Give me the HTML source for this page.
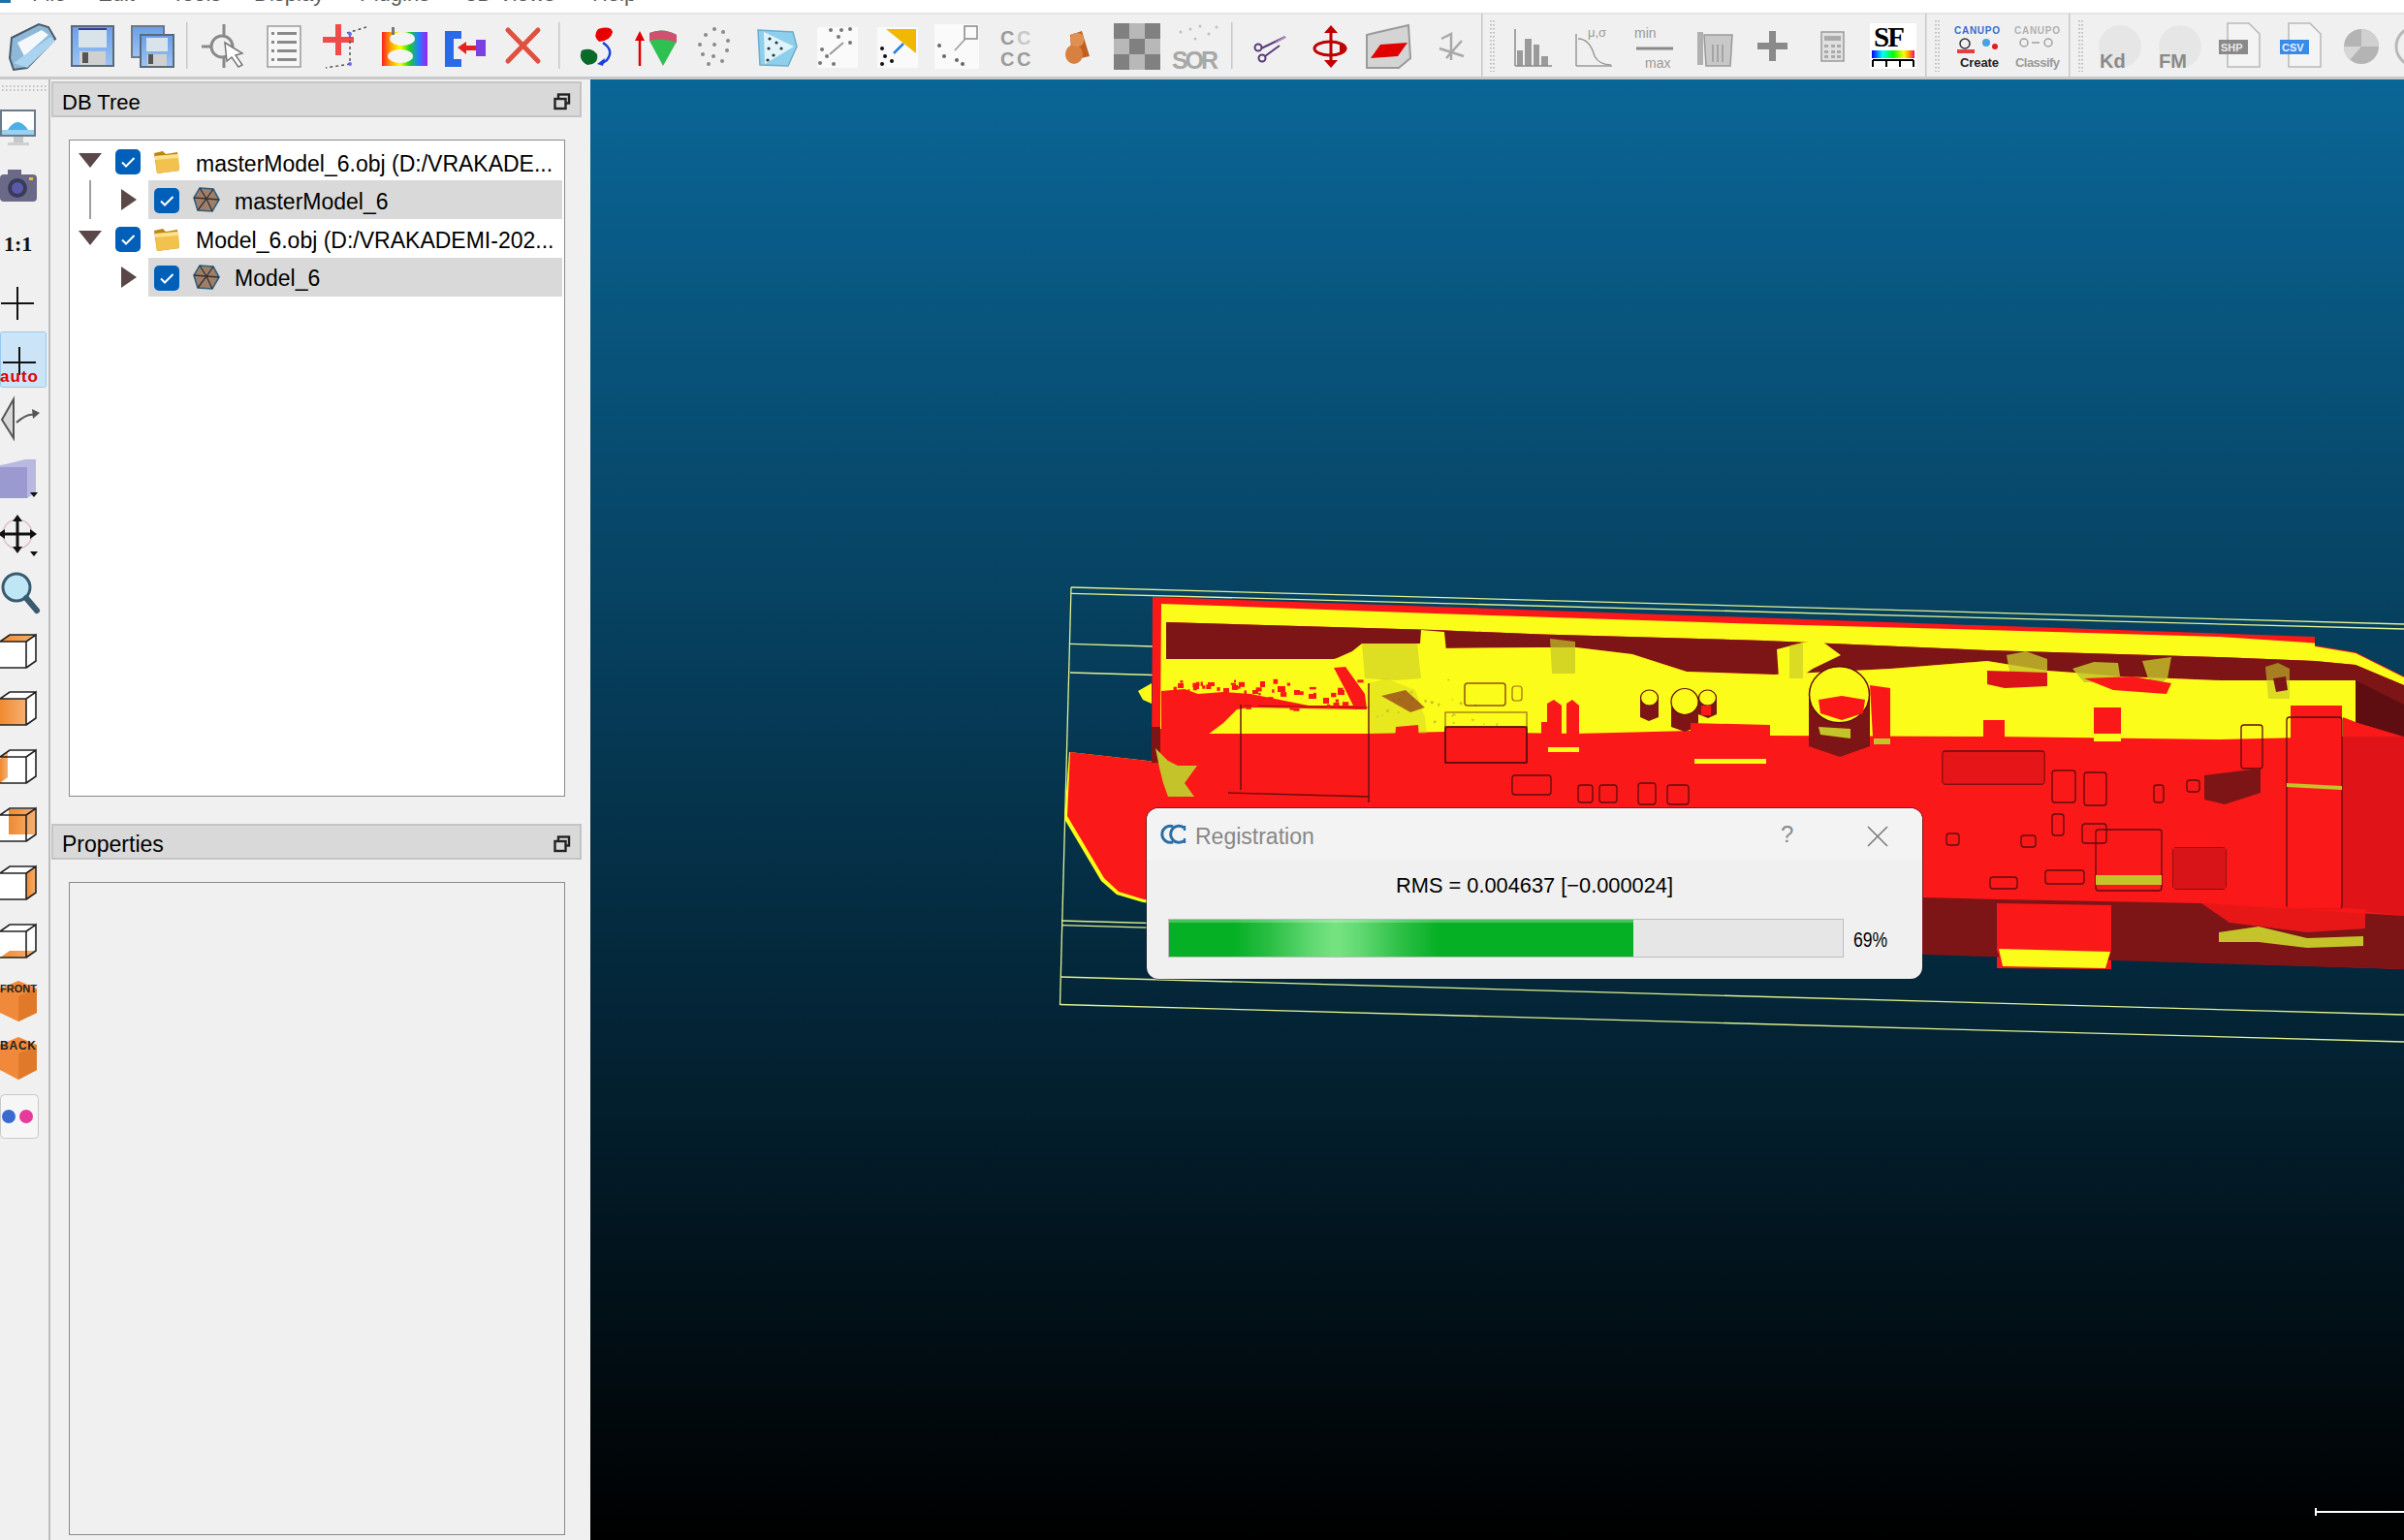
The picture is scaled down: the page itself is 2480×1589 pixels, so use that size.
<!DOCTYPE html>
<html><head><meta charset="utf-8">
<style>
*{margin:0;padding:0;box-sizing:border-box}
html,body{width:2480px;height:1589px;overflow:hidden;background:#f0f0f0;font-family:"Liberation Sans",sans-serif}
.abs{position:absolute}
#menubar{left:0;top:0;width:2480px;height:14px;background:#fff;overflow:hidden}
#menubar span{position:absolute;top:-17px;font-size:22px;line-height:1;color:#5a5a5a}
#tb{left:0;top:14px;width:2480px;height:68px;background:#f0f0f0;border-top:1px solid #e6e6e6}
#tbline{left:0;top:79px;width:2480px;height:3px;background:#c9c9c9}
#view{left:609px;top:82px;width:1871px;height:1507px;background:linear-gradient(to bottom,rgb(10,102,151) 0%,rgb(0,0,0) 100%);overflow:hidden}
#vsep{left:50px;top:82px;width:2px;height:1507px;background:#bdbdbd}
.dockhdr{left:53px;width:547px;height:37px;background:#d9d9d9;border:2px solid #c4c4c4;font-size:22px;color:#000}
.dockhdr .t{position:absolute;left:9px;top:7px}
.box{left:71px;width:512px;border:1px solid #8a8a8a}
.row{position:absolute;left:0;height:40px}
.sel{position:absolute;left:82px;width:427px;height:40px;background:#d9d9d9}
.cb{position:absolute;width:26px;height:26px;background:#005fb8;border-radius:5px}
.txt{position:absolute;font-size:23px;color:#000;white-space:nowrap;margin-top:5px}
</style></head><body>
<div id="menubar" class="abs">
<div class="abs" style="left:0;top:-8px;width:11px;height:11px;background:#1f6fa8"></div>
<span style="left:33px">File</span><span style="left:101px">Edit</span><span style="left:177px">Tools</span><span style="left:262px">Display</span><span style="left:371px">Plugins</span><span style="left:480px">3D Views</span><span style="left:611px">Help</span>
<div class="abs" style="left:0;top:13px;width:2480px;height:1px;background:#e3e3e3"></div>
</div>
<div id="tb" class="abs"></div>
<div id="tbline" class="abs"></div>
<div id="vsep" class="abs"></div>
<!--TOOLBAR-->
<svg class="abs" style="left:0;top:0" width="2480" height="82" viewBox="0 0 2480 82">
<defs>
<linearGradient id="rainbow" x1="0" y1="0" x2="1" y2="0"><stop offset="0" stop-color="#ff2020"/><stop offset="0.2" stop-color="#ffa500"/><stop offset="0.4" stop-color="#ffff00"/><stop offset="0.6" stop-color="#20d020"/><stop offset="0.8" stop-color="#2080ff"/><stop offset="1" stop-color="#a020f0"/></linearGradient>
<linearGradient id="sfbar" x1="0" y1="0" x2="1" y2="0"><stop offset="0" stop-color="#0000ff"/><stop offset="0.25" stop-color="#00ffff"/><stop offset="0.5" stop-color="#00ff00"/><stop offset="0.75" stop-color="#ffff00"/><stop offset="0.9" stop-color="#ff8000"/><stop offset="1" stop-color="#ff0080"/></linearGradient>
<linearGradient id="flop" x1="0" y1="0" x2="0" y2="1"><stop offset="0" stop-color="#6a9ee8"/><stop offset="1" stop-color="#9cc4f4"/></linearGradient>
</defs>
<!-- separators -->
<g fill="#c8c8c8">
<rect x="192" y="23" width="1.5" height="48"/>
<rect x="576" y="23" width="1.5" height="48"/>
<rect x="1270" y="23" width="1.5" height="48"/>
<rect x="1528" y="14" width="1.5" height="66"/>
<rect x="1986" y="14" width="1.5" height="66"/>
<rect x="2134" y="14" width="1.5" height="66"/>
</g>
<g fill="#b8b8b8">

</g>
<g stroke="#b0b0b0" stroke-width="1.5" stroke-dasharray="1.5 2.5">
<line x1="1538" y1="21" x2="1538" y2="74"/><line x1="1541" y1="21" x2="1541" y2="74"/>
<line x1="1997" y1="21" x2="1997" y2="74"/><line x1="2000" y1="21" x2="2000" y2="74"/>
<line x1="2145" y1="21" x2="2145" y2="74"/><line x1="2148" y1="21" x2="2148" y2="74"/>
</g>
<!-- 1 open folder -->
<path d="M12,39 L40,25 L50,28 L57,40 L28,70 L14,72 L10,60 Z" fill="#8fb8d8" stroke="#4a5a68" stroke-width="2"/>
<path d="M18,44 L43,31 L50,36 L25,58 Z" fill="#f4f8fb"/>
<path d="M14,65 L52,38 L57,42 L28,70 Z" fill="#a9d3ee"/>
<!-- 2 save -->
<rect x="74" y="27" width="43" height="41" fill="url(#flop)" stroke="#5a6a78" stroke-width="2"/>
<rect x="81" y="29" width="29" height="20" fill="#d8e4ea"/>
<rect x="81" y="29" width="29" height="2" fill="#3a3aa0"/>
<rect x="82" y="53" width="27" height="14" fill="#d0d0d0"/>
<rect x="85" y="54" width="6" height="11" fill="#555"/>
<!-- 3 save all -->
<rect x="136" y="27" width="33" height="32" fill="url(#flop)" stroke="#6a7a88" stroke-width="2"/>
<rect x="145" y="36" width="34" height="33" fill="url(#flop)" stroke="#5a6a78" stroke-width="2"/>
<rect x="151" y="39" width="22" height="14" fill="#d8e4ea"/>
<rect x="152" y="56" width="20" height="12" fill="#d0d0d0"/>
<rect x="153" y="56" width="5" height="10" fill="#555"/>
<!-- 4 point pick -->
<g stroke="#8a8a8a" stroke-width="3" fill="none"><circle cx="229" cy="48" r="11"/><line x1="231" y1="25" x2="231" y2="37"/><line x1="208" y1="48" x2="218" y2="48"/><line x1="231" y1="59" x2="231" y2="70"/></g>
<path d="M232,44 L250,55 L243,57 L250,67 L246,69 L239,59 L234,63 Z" fill="#fff" stroke="#777" stroke-width="1.5"/>
<!-- 5 list -->
<rect x="276" y="27" width="34" height="42" fill="#f7f7f7" stroke="#9a9a9a" stroke-width="1.5"/>
<g fill="#8a8a8a"><rect x="280" y="33" width="3" height="3"/><rect x="286" y="33" width="20" height="3"/><rect x="280" y="42" width="3" height="3"/><rect x="286" y="42" width="20" height="3"/><rect x="280" y="51" width="3" height="3"/><rect x="286" y="51" width="20" height="3"/><rect x="280" y="60" width="3" height="3"/><rect x="286" y="60" width="20" height="3"/></g>
<!-- 6 red cross -->
<path d="M346,25 L352,25 L352,38 L365,38 L365,44 L352,44 L352,57 L346,57 L346,44 L333,44 L333,38 L346,38 Z" fill="#f04a4a"/>
<g stroke="#555" stroke-width="1.5" stroke-dasharray="3 3" fill="none"><path d="M358,34 L378,28"/><path d="M361,36 L361,66 L336,70"/></g>
<circle cx="361" cy="35" r="2" fill="#6a6aff"/><circle cx="361" cy="66" r="2" fill="#6a6aff"/>
<!-- 7 rainbow sheep -->
<rect x="394" y="33" width="47" height="35" fill="url(#rainbow)"/>
<ellipse cx="415" cy="40" rx="13" ry="7" fill="#f4f4f4"/><ellipse cx="413" cy="58" rx="13" ry="7" fill="#f4f4f4"/>
<rect x="404" y="28" width="3" height="8" fill="#777"/>
<!-- 8 blue bracket -->
<path d="M459,32 L476,32 L476,40 L468,40 L468,61 L476,61 L476,69 L459,69 Z" fill="#2a6ae8"/>
<path d="M472,49 L481,43 L481,47 L493,47 L493,52 L481,52 L481,56 Z" fill="#e82020"/>
<rect x="491" y="41" width="10" height="17" fill="#7a40e0"/>
<!-- 9 red X -->
<g stroke="#e05040" stroke-width="5" stroke-linecap="round"><line x1="524" y1="31" x2="555" y2="63"/><line x1="555" y1="31" x2="524" y2="63"/></g>
<!-- 10 blobs arrow -->
<path d="M617,30 Q630,26 632,33 Q630,42 618,43 Q611,37 617,30 Z" fill="#e80000"/>
<path d="M600,52 Q610,48 616,56 Q618,66 606,67 Q596,62 600,52 Z" fill="#0a6a2a"/>
<path d="M622,44 Q634,52 626,62 L620,66" fill="none" stroke="#1a40e0" stroke-width="2.5"/>
<path d="M616,66 L624,60 L622,68 Z" fill="#1a40e0"/>
<!-- 11 red arrow + cone -->
<line x1="660" y1="68" x2="660" y2="38" stroke="#e00000" stroke-width="2.5"/><path d="M655,42 L660,32 L665,42 Z" fill="#e00000"/>
<path d="M670,34 Q684,28 698,36 L698,43 L684,68 L670,42 Z" fill="#2ec050"/>
<path d="M670,34 Q684,28 698,36 L698,44 Q684,38 670,42 Z" fill="#d05070"/>
<!-- 12 dots circle -->
<g fill="#8a8a8a"><circle cx="737" cy="30" r="2"/><circle cx="746" cy="33" r="2"/><circle cx="728" cy="36" r="2"/><circle cx="751" cy="42" r="2"/><circle cx="722" cy="46" r="2"/><circle cx="737" cy="46" r="2"/><circle cx="750" cy="52" r="2"/><circle cx="725" cy="56" r="2"/><circle cx="736" cy="58" r="2"/><circle cx="745" cy="63" r="2"/><circle cx="731" cy="66" r="2"/></g>
<!-- 13 blue triangle -->
<path d="M782,31 L818,33 L822,48 L813,68 L784,67 Z" fill="#8ed0ec" stroke="#6aaed0" stroke-width="1.5"/>
<path d="M788,33 L819,48 L789,66 Z" fill="#dff3fb"/>
<g fill="#333"><circle cx="794" cy="40" r="1.6"/><circle cx="801" cy="44" r="1.6"/><circle cx="793" cy="50" r="1.6"/><circle cx="806" cy="50" r="1.6"/><circle cx="798" cy="57" r="1.6"/><circle cx="792" cy="62" r="1.6"/></g>
<!-- 14 scattered dots -->
<rect x="843" y="28" width="42" height="42" fill="#fafafa"/>
<g fill="#777"><circle cx="857" cy="31" r="2"/><circle cx="868" cy="31" r="2"/><circle cx="877" cy="30" r="2"/><circle cx="865" cy="38" r="2"/><circle cx="877" cy="44" r="2"/><circle cx="848" cy="51" r="2"/><circle cx="853" cy="58" r="2"/><circle cx="846" cy="65" r="2"/><circle cx="860" cy="66" r="2"/></g>
<line x1="856" y1="56" x2="870" y2="44" stroke="#999" stroke-width="2"/>
<!-- 15 yellow tri -->
<rect x="905" y="28" width="42" height="42" fill="#fafafa"/>
<path d="M914,30 L945,30 L945,55 Z" fill="#f0b800"/>
<g fill="#111"><circle cx="910" cy="50" r="2"/><circle cx="913" cy="58" r="2"/><circle cx="920" cy="63" r="2"/><circle cx="910" cy="66" r="2"/></g>
<line x1="922" y1="55" x2="932" y2="45" stroke="#2a80e0" stroke-width="2.5"/>
<!-- 16 dots zoom -->
<rect x="964" y="25" width="46" height="46" fill="#fafafa"/>
<rect x="995" y="27" width="13" height="13" fill="none" stroke="#888" stroke-width="1.5"/>
<line x1="985" y1="52" x2="996" y2="40" stroke="#999" stroke-width="1.5"/>
<g fill="#666"><circle cx="969" cy="47" r="2"/><circle cx="974" cy="58" r="2"/><circle cx="987" cy="62" r="2"/><circle cx="993" cy="66" r="2"/></g>
<!-- 17 CC CC -->
<g font-family="Liberation Sans" font-weight="bold" font-size="20" fill="#9a9a9a"><text x="1032" y="46">C</text><text x="1049" y="46" fill="#c8c8c8">C</text><text x="1032" y="68">C</text><text x="1049" y="68">C</text></g>
<!-- 18 orange -->
<path d="M1104,36 L1116,32 L1124,58 L1106,62 Z" fill="#c06020"/>
<ellipse cx="1108" cy="56" rx="9" ry="10" fill="#d88040"/>
<rect x="1104" y="34" width="14" height="14" rx="6" fill="#e09050"/>
<!-- 19 checker -->
<g fill="#808080"><rect x="1149" y="24" width="48" height="48"/></g>
<g fill="#b8b8b8"><rect x="1165" y="24" width="16" height="16"/><rect x="1149" y="40" width="16" height="16"/><rect x="1181" y="40" width="16" height="16"/><rect x="1165" y="56" width="16" height="16"/></g>
<!-- 20 SOR -->
<text x="1209" y="71" font-family="Liberation Sans" font-weight="bold" font-size="25" fill="#a8a8a8" textLength="48">SOR</text>
<g fill="#c0c0c0"><circle cx="1218" cy="33" r="1.5"/><circle cx="1228" cy="30" r="1.5"/><circle cx="1238" cy="27" r="1.5"/><circle cx="1247" cy="35" r="1.5"/><circle cx="1255" cy="28" r="1.5"/><circle cx="1233" cy="40" r="1.5"/></g>
<!-- 21 scissors -->
<g stroke="#5a3a7a" stroke-width="2" fill="none"><circle cx="1298" cy="49" r="3.5"/><circle cx="1302" cy="60" r="3.5"/><path d="M1301,50 L1326,38 M1305,58 L1320,47"/></g>
<path d="M1316,44 L1326,38" stroke="#b090c0" stroke-width="2"/>
<!-- 22 move arrows -->
<g stroke="#c00000" stroke-width="3" fill="none"><line x1="1373" y1="31" x2="1373" y2="65"/><ellipse cx="1372" cy="50" rx="16" ry="7"/></g>
<g fill="#c00000"><path d="M1366,34 L1373,26 L1380,34 Z"/><path d="M1366,62 L1373,70 L1380,62 Z"/><path d="M1382,45 L1390,50 L1382,55 Z"/></g>
<!-- 23 box red plane -->
<path d="M1418,34 L1453,26 L1455,60 L1443,70 L1410,70 L1410,36 Z" fill="#d4d4d4" stroke="#9a9a9a" stroke-width="2"/>
<path d="M1414,60 L1424,46 L1452,44 L1442,58 Z" fill="#e00000"/>
<!-- 24 gray star -->
<g stroke="#a8a8a8" stroke-width="2.5" fill="none"><path d="M1487,40 L1497,35 L1497,62 M1485,50 L1510,58 M1492,60 L1508,42"/></g>
<!-- 25 histogram -->
<g fill="#9a9a9a"><rect x="1565" y="52" width="6" height="16"/><rect x="1573" y="40" width="7" height="28"/><rect x="1582" y="46" width="6" height="22"/><rect x="1590" y="58" width="7" height="10"/></g>
<g stroke="#8a8a8a" stroke-width="1.5"><line x1="1563" y1="30" x2="1563" y2="68"/><line x1="1563" y1="68" x2="1601" y2="68"/></g>
<!-- 26 mu sigma -->
<g stroke="#9a9a9a" stroke-width="1.5" fill="none"><line x1="1626" y1="35" x2="1626" y2="68"/><line x1="1626" y1="68" x2="1663" y2="68"/><path d="M1628,40 Q1640,40 1645,58 Q1650,67 1662,67"/></g>
<text x="1638" y="38" font-family="Liberation Sans" font-size="13" fill="#9a9a9a">μ,σ</text>
<!-- 27 min max -->
<g font-family="Liberation Sans" font-size="14" fill="#9a9a9a"><text x="1686" y="39">min</text><text x="1697" y="70">max</text></g>
<g stroke="#8a8a8a" stroke-width="3"><line x1="1688" y1="50" x2="1726" y2="50"/></g>
<!-- 28 trash -->
<rect x="1751" y="33" width="6" height="34" fill="#b0b0b0"/>
<path d="M1758,36 L1787,36 L1785,68 L1760,68 Z" fill="#c8c8c8" stroke="#999" stroke-width="1.5"/>
<g stroke="#999" stroke-width="1.5"><line x1="1767" y1="46" x2="1767" y2="64"/><line x1="1772" y1="46" x2="1772" y2="64"/><line x1="1777" y1="46" x2="1777" y2="64"/></g>
<!-- 29 plus -->
<path d="M1825,32 L1832,32 L1832,44 L1844,44 L1844,51 L1832,51 L1832,63 L1825,63 L1825,51 L1813,51 L1813,44 L1825,44 Z" fill="#8a8a8a"/>
<!-- 30 calculator -->
<rect x="1879" y="33" width="23" height="30" fill="#e0e0e0" stroke="#9a9a9a" stroke-width="1.5"/>
<rect x="1882" y="37" width="17" height="5" fill="#aaa"/>
<g fill="#aaa"><rect x="1882" y="46" width="4" height="3"/><rect x="1889" y="46" width="4" height="3"/><rect x="1895" y="46" width="4" height="3"/><rect x="1882" y="52" width="4" height="3"/><rect x="1889" y="52" width="4" height="3"/><rect x="1895" y="52" width="4" height="3"/><rect x="1882" y="57" width="4" height="3"/><rect x="1889" y="57" width="4" height="3"/><rect x="1895" y="57" width="4" height="3"/></g>
<!-- 31 SF -->
<rect x="1929" y="24" width="48" height="47" fill="#fff"/>
<text x="1933" y="48" font-family="Liberation Serif" font-weight="bold" font-size="29" fill="#000" letter-spacing="-2">SF</text>
<rect x="1931" y="52" width="44" height="8" fill="url(#sfbar)"/>
<path d="M1932,62 L1974,62 M1932,62 L1932,69 M1946,62 L1946,69 M1960,62 L1960,69 M1974,62 L1974,69" stroke="#000" stroke-width="2"/>
<!-- 32 canupo create -->
<text x="2016" y="35" font-family="Liberation Sans" font-weight="bold" font-size="10" fill="#3a6ad0" textLength="47">CANUPO</text>
<circle cx="2027" cy="45" r="5" fill="none" stroke="#333" stroke-width="1.5"/><circle cx="2049" cy="44" r="4" fill="#4aa0e0"/><circle cx="2058" cy="48" r="3" fill="#e02020"/>
<rect x="2019" y="51" width="18" height="4" fill="#e04040"/>
<text x="2022" y="69" font-family="Liberation Sans" font-weight="bold" font-size="13" fill="#222" textLength="40">Create</text>
<!-- 33 canupo classify -->
<text x="2078" y="35" font-family="Liberation Sans" font-weight="bold" font-size="10" fill="#b0b0b0" textLength="47">CANUPO</text>
<g stroke="#a0a0a0" stroke-width="1.5" fill="none"><circle cx="2088" cy="44" r="4"/><circle cx="2113" cy="44" r="4"/><line x1="2096" y1="44" x2="2104" y2="44"/></g>
<text x="2079" y="69" font-family="Liberation Sans" font-weight="bold" font-size="13" fill="#9a9a9a" textLength="46">Classify</text>
<!-- 34 Kd -->
<ellipse cx="2187" cy="48" rx="22" ry="22" fill="#e6e6e6"/>
<text x="2166" y="70" font-family="Liberation Sans" font-weight="bold" font-size="20" fill="#8a8a8a">Kd</text>
<!-- 35 FM -->
<ellipse cx="2249" cy="48" rx="22" ry="22" fill="#e6e6e6"/>
<text x="2227" y="70" font-family="Liberation Sans" font-weight="bold" font-size="20" fill="#8a8a8a">FM</text>
<!-- 36 SHP -->
<path d="M2298,24 L2320,24 L2331,35 L2331,69 L2298,69 Z" fill="#f4f4f4" stroke="#b8b8b8" stroke-width="1.5"/>
<rect x="2289" y="41" width="30" height="15" fill="#8a8a8a"/>
<text x="2291" y="53" font-family="Liberation Sans" font-weight="bold" font-size="11" fill="#e8e8e8">SHP</text>
<!-- 37 CSV -->
<path d="M2361,24 L2383,24 L2394,35 L2394,69 L2361,69 Z" fill="#f4f4f4" stroke="#b8b8b8" stroke-width="1.5"/>
<rect x="2352" y="41" width="30" height="15" fill="#3a8ae8"/>
<text x="2354" y="53" font-family="Liberation Sans" font-weight="bold" font-size="11" fill="#e8f0ff">CSV</text>
<!-- 38 gray circle -->
<circle cx="2436" cy="48" r="18" fill="#b4b4b4"/>
<path d="M2436,48 L2436,30 A18,18 0 0 1 2454,48 Z" fill="#d0d0d0"/>
<path d="M2436,48 L2424,62 A18,18 0 0 1 2418,48 Z" fill="#d6d6d6"/>
<circle cx="2492" cy="48" r="20" fill="none" stroke="#b8b8b8" stroke-width="3"/>
</svg>

<!--LEFTTB-->
<svg class="abs" style="left:0;top:82px" width="50" height="1120" viewBox="0 82 50 1120">
<defs>
<linearGradient id="org" x1="0" y1="0" x2="1" y2="0"><stop offset="0" stop-color="#f08a30"/><stop offset="1" stop-color="#f6b070"/></linearGradient>
</defs>
<g stroke="#b0b0b0" stroke-width="1.5" stroke-dasharray="1.5 2.5"><line x1="2" y1="89" x2="48" y2="89"/><line x1="2" y1="93" x2="48" y2="93"/></g>
<!-- monitor -->
<rect x="1" y="114" width="35" height="26" fill="#fff" stroke="#6a7a88" stroke-width="2"/>
<path d="M8,134 Q18,118 29,134 Z" fill="#4ab0e8"/>
<rect x="2" y="134" width="33" height="5" fill="#9ad0f0"/>
<rect x="14" y="141" width="10" height="6" fill="#c8c8c8"/><rect x="8" y="147" width="22" height="3" fill="#d0d0d0"/>
<!-- camera -->
<rect x="0" y="180" width="38" height="28" rx="4" fill="#6a6a88"/>
<rect x="8" y="175" width="14" height="7" fill="#6a6a88"/>
<circle cx="18" cy="194" r="10" fill="#3a3a5a"/><circle cx="18" cy="194" r="6" fill="#5a5aa8"/>
<rect x="30" y="183" width="4" height="3" fill="#f0c020"/>
<!-- 1:1 -->
<text x="4" y="259" font-family="Liberation Serif" font-weight="bold" font-size="22" fill="#111">1:1</text>
<!-- cross -->
<g stroke="#111" stroke-width="2"><line x1="18" y1="296" x2="18" y2="330"/><line x1="1" y1="313" x2="35" y2="313"/></g>
<!-- auto (highlighted) -->
<rect x="0.5" y="342.5" width="47" height="57" rx="2" fill="#cce4f7" stroke="#99c9ef" stroke-width="1"/>
<g stroke="#111" stroke-width="2"><line x1="20" y1="358" x2="20" y2="387"/><line x1="3" y1="374" x2="37" y2="374"/></g>
<text x="0" y="394" font-family="Liberation Sans" font-weight="bold" font-size="17" fill="#e00000" textLength="39">auto</text>
<!-- perspective -->
<path d="M2,433 L14,412 L14,452 Z" fill="#d8d8d8" stroke="#555" stroke-width="2"/>
<path d="M17,436 Q28,426 36,428" fill="none" stroke="#555" stroke-width="2"/><path d="M33,422 L41,426 L34,432 Z" fill="#555"/>
<!-- cube -->
<path d="M6,479 L26,474 L37,474 L37,508 L28,514 L0,514 L0,480 Z" fill="#b8b8e0"/>
<rect x="0" y="482" width="28" height="32" fill="#9a9ad0"/>
<path d="M31,508 L39,508 L35,513 Z" fill="#111"/>
<!-- move -->
<circle cx="18" cy="551" r="15" fill="none" stroke="#e0c0c0" stroke-width="1.5"/>
<g stroke="#111" stroke-width="3"><line x1="18" y1="535" x2="18" y2="568"/><line x1="2" y1="551" x2="34" y2="551"/></g>
<g fill="#111"><path d="M13,538 L18,531 L23,538 Z"/><path d="M13,564 L18,571 L23,564 Z"/><path d="M5,546 L-2,551 L5,556 Z"/><path d="M31,546 L38,551 L31,556 Z"/></g>
<path d="M31,569 L39,569 L35,574 Z" fill="#111"/>
<!-- magnifier -->
<circle cx="17" cy="606" r="14" fill="#bfe6f4" stroke="#3a5a70" stroke-width="3"/>
<line x1="27" y1="617" x2="38" y2="630" stroke="#3a5a70" stroke-width="6" stroke-linecap="round"/>
<!-- cubes: top, front, left, back, right, bottom -->
<path d="M0,662 L27,662 L27,689 L0,689 Z" fill="#fff"/><path d="M0,662 L10,655 L37,655 L27,662 Z" fill="#fff"/><path d="M27,662 L37,655 L37,682 L27,689 Z" fill="#fff"/>
<path d="M0,662 L10,655 L37,655 L27,662 Z" fill="url(#org)"/>
<path d="M0,662 L27,662 L27,689 L0,689 M27,662 L37,655 L37,682 L27,689 M0,662 L10,655 L37,655" fill="none" stroke="#222" stroke-width="1.6"/>
<path d="M0,721 L27,721 L27,748 L0,748 Z" fill="#fff"/><path d="M0,721 L10,714 L37,714 L27,721 Z" fill="#fff"/><path d="M27,721 L37,714 L37,741 L27,748 Z" fill="#fff"/>
<path d="M0,721 L27,721 L27,748 L0,748 Z" fill="url(#org)"/>
<path d="M0,721 L27,721 L27,748 L0,748 M27,721 L37,714 L37,741 L27,748 M0,721 L10,714 L37,714" fill="none" stroke="#222" stroke-width="1.6"/>
<path d="M0,781 L27,781 L27,808 L0,808 Z" fill="#fff"/><path d="M0,781 L10,774 L37,774 L27,781 Z" fill="#fff"/><path d="M27,781 L37,774 L37,801 L27,808 Z" fill="#fff"/>
<path d="M0,783 L8,775 L8,802 L0,808 Z" fill="url(#org)"/>
<path d="M0,781 L27,781 L27,808 L0,808 M27,781 L37,774 L37,801 L27,808 M0,781 L10,774 L37,774" fill="none" stroke="#222" stroke-width="1.6"/>
<path d="M0,841 L27,841 L27,868 L0,868 Z" fill="#fff"/><path d="M0,841 L10,834 L37,834 L27,841 Z" fill="#fff"/><path d="M27,841 L37,834 L37,861 L27,868 Z" fill="#fff"/>
<rect x="9" y="835" width="27" height="26" fill="url(#org)"/>
<path d="M0,841 L27,841 L27,868 L0,868 M27,841 L37,834 L37,861 L27,868 M0,841 L10,834 L37,834" fill="none" stroke="#222" stroke-width="1.6"/>
<path d="M0,901 L27,901 L27,928 L0,928 Z" fill="#fff"/><path d="M0,901 L10,894 L37,894 L27,901 Z" fill="#fff"/><path d="M27,901 L37,894 L37,921 L27,928 Z" fill="#fff"/>
<path d="M27,901 L37,894 L37,921 L27,928 Z" fill="url(#org)"/>
<path d="M0,901 L27,901 L27,928 L0,928 M27,901 L37,894 L37,921 L27,928 M0,901 L10,894 L37,894" fill="none" stroke="#222" stroke-width="1.6"/>
<path d="M0,961 L27,961 L27,988 L0,988 Z" fill="#fff"/><path d="M0,961 L10,954 L37,954 L27,961 Z" fill="#fff"/><path d="M27,961 L37,954 L37,981 L27,988 Z" fill="#fff"/>
<path d="M0,988 L10,981 L37,981 L27,988 Z" fill="url(#org)"/>
<path d="M0,961 L27,961 L27,988 L0,988 M27,961 L37,954 L37,981 L27,988 M0,961 L10,954 L37,954" fill="none" stroke="#222" stroke-width="1.6"/>
<!-- FRONT iso -->
<path d="M0,1020 L19,1012 L38,1020 L38,1045 L19,1054 L0,1045 Z" fill="#f08a3a"/>
<path d="M19,1028 L38,1020 L38,1045 L19,1054 Z" fill="#e07a2a"/>
<text x="0" y="1024" font-family="Liberation Sans" font-weight="bold" font-size="11" fill="#222" textLength="38">FRONT</text>
<!-- BACK iso -->
<path d="M0,1078 L19,1070 L38,1078 L38,1104 L19,1114 L0,1104 Z" fill="#f08a3a"/>
<path d="M19,1087 L38,1078 L38,1104 L19,1114 Z" fill="#e07a2a"/>
<text x="0" y="1083" font-family="Liberation Sans" font-weight="bold" font-size="12" fill="#222" textLength="37">BACK</text>
<!-- dots button -->
<rect x="0.5" y="1129.5" width="39" height="45" rx="4" fill="#f6f6f6" stroke="#c8c8c8" stroke-width="1"/>
<circle cx="9" cy="1152" r="7" fill="#3a6ad0"/><circle cx="27" cy="1152" r="7" fill="#e83a9a"/>
</svg>

<!--/LEFTTB-->

<!-- DB tree -->
<div class="abs dockhdr" style="top:84px"><span class="t">DB Tree</span><div class="abs" style="left:516px;top:8px"><svg width="18" height="18" viewBox="0 0 18 18"><rect x="5" y="1.5" width="11" height="9" fill="none" stroke="#222" stroke-width="2.4"/><rect x="1.5" y="6" width="11" height="10" fill="#d9d9d9" stroke="#222" stroke-width="2.4"/></svg></div></div>
<div class="abs box" style="top:144px;height:678px;background:#fff"></div>
<div class="abs" style="left:153px;top:186px;width:427px;height:40px;background:#d9d9d9"></div>
<div class="abs" style="left:153px;top:266px;width:427px;height:40px;background:#d9d9d9"></div>
<div class="abs" style="left:92px;top:186px;width:2px;height:40px;background:#a0a0a0"></div>
<div class="abs" style="left:81px;top:158px"><svg width="24" height="16" viewBox="0 0 24 16"><path d="M0,0 L24,0 L12,15 Z" fill="#5a4848"/></svg></div>
<div class="abs" style="left:81px;top:238px"><svg width="24" height="16" viewBox="0 0 24 16"><path d="M0,0 L24,0 L12,15 Z" fill="#5a4848"/></svg></div>
<div class="abs" style="left:125px;top:195px"><svg width="16" height="22" viewBox="0 0 16 22"><path d="M0,0 L16,11 L0,22 Z" fill="#5a4848"/></svg></div>
<div class="abs" style="left:125px;top:275px"><svg width="16" height="22" viewBox="0 0 16 22"><path d="M0,0 L16,11 L0,22 Z" fill="#5a4848"/></svg></div>
<div class="abs" style="left:119px;top:154px;width:26px;height:26px;background:#005fb8;border-radius:5px"><svg width="26" height="26" viewBox="0 0 26 26"><path d="M7,13.5 L11,17.5 L19.5,9" fill="none" stroke="#fff" stroke-width="2"/></svg></div>
<div class="abs" style="left:119px;top:234px;width:26px;height:26px;background:#005fb8;border-radius:5px"><svg width="26" height="26" viewBox="0 0 26 26"><path d="M7,13.5 L11,17.5 L19.5,9" fill="none" stroke="#fff" stroke-width="2"/></svg></div>
<div class="abs" style="left:159px;top:194px;width:26px;height:26px;background:#005fb8;border-radius:5px"><svg width="26" height="26" viewBox="0 0 26 26"><path d="M7,13.5 L11,17.5 L19.5,9" fill="none" stroke="#fff" stroke-width="2"/></svg></div>
<div class="abs" style="left:159px;top:274px;width:26px;height:26px;background:#005fb8;border-radius:5px"><svg width="26" height="26" viewBox="0 0 26 26"><path d="M7,13.5 L11,17.5 L19.5,9" fill="none" stroke="#fff" stroke-width="2"/></svg></div>
<div class="abs" style="left:157px;top:152px"><svg width="30" height="28" viewBox="0 0 30 28"><path d="M2,6 L11,4 L14,7 L26,5 L28,24 L5,27 Z" fill="#b8860b"/><path d="M3,9 L27,7 L28,24 L5,27 Z" fill="#f2c14e"/><path d="M3,9 L27,7 L27,11 L3,13 Z" fill="#ffe08a"/></svg></div>
<div class="abs" style="left:157px;top:232px"><svg width="30" height="28" viewBox="0 0 30 28"><path d="M2,6 L11,4 L14,7 L26,5 L28,24 L5,27 Z" fill="#b8860b"/><path d="M3,9 L27,7 L28,24 L5,27 Z" fill="#f2c14e"/><path d="M3,9 L27,7 L27,11 L3,13 Z" fill="#ffe08a"/></svg></div>
<div class="abs" style="left:198px;top:191px"><svg width="30" height="30" viewBox="0 0 30 30"><path d="M8,3 L22,4 L28,15 L21,27 L6,26 L2,13 Z" fill="#9f7f68" stroke="#2f5f7f" stroke-width="1.6"/><path d="M8,3 L15,14 L22,4 M2,13 L15,14 L28,15 M6,26 L15,14 L21,27" fill="none" stroke="#333" stroke-width="1.3"/></svg></div>
<div class="abs" style="left:198px;top:271px"><svg width="30" height="30" viewBox="0 0 30 30"><path d="M8,3 L22,4 L28,15 L21,27 L6,26 L2,13 Z" fill="#9f7f68" stroke="#2f5f7f" stroke-width="1.6"/><path d="M8,3 L15,14 L22,4 M2,13 L15,14 L28,15 M6,26 L15,14 L21,27" fill="none" stroke="#333" stroke-width="1.3"/></svg></div>
<div class="abs txt" style="left:202px;top:151px">masterModel_6.obj (D:/VRAKADE...</div>
<div class="abs txt" style="left:242px;top:190px">masterModel_6</div>
<div class="abs txt" style="left:202px;top:230px">Model_6.obj (D:/VRAKADEMI-202...</div>
<div class="abs txt" style="left:242px;top:269px">Model_6</div>


<!-- Properties -->
<div class="abs dockhdr" style="top:850px"><span class="t" style="font-size:23px;top:6px">Properties</span><div class="abs" style="left:516px;top:8px"><svg width="18" height="18" viewBox="0 0 18 18"><rect x="5" y="1.5" width="11" height="9" fill="none" stroke="#222" stroke-width="2.4"/><rect x="1.5" y="6" width="11" height="10" fill="#d9d9d9" stroke="#222" stroke-width="2.4"/></svg></div></div>
<div class="abs box" style="top:910px;height:674px;background:#f0f0f0"></div>

<div id="view" class="abs"><svg class="abs" style="left:0;top:0" width="1871" height="1507" viewBox="609 82 1871 1507">
<g stroke="#e2f290" stroke-width="1.3" fill="none">
<line x1="1105" y1="606" x2="2480" y2="644"/>
<line x1="1105" y1="612.3" x2="2480" y2="649"/>
<line x1="1104" y1="664.3" x2="1190" y2="667"/>
<line x1="1104" y1="694" x2="1190" y2="696.5"/>
<line x1="1105" y1="606" x2="1093.5" y2="1037"/>
<line x1="1095" y1="950" x2="2480" y2="987.6"/>
<line x1="1095" y1="954.7" x2="2480" y2="993"/>
<line x1="1094.5" y1="1008" x2="2480" y2="1047"/>
<line x1="1093.5" y1="1036.5" x2="2480" y2="1075"/>
</g>
<path d="M1103,776 L1193,786 L1200,934 L1179,931 L1152,923 L1136,909 L1098,845 Z" fill="#fcfc1a" />
<path d="M1104,776 L1193,786 L1200,930 L1180,928 L1154,920 L1139,906 L1101,842 Z" fill="#fa1818" />
<path d="M1174,713 L1188,705 L1188,726 L1179,722 Z" fill="#fcfc1a" />
<path d="M1190,616 L2388,657 L2388,666 L2430,673 L2480,698 L2480,1000 L2178,990 L2178,1000 L2060,999 L2060,985 L1984,984 L1183,960 L1183,790 L1188,787 L1189,616 Z" fill="#fa1818" />
<rect x="1188" y="750" width="9" height="37" fill="#7d1517" />
<path d="M1984,926 L2060,928 L2271,932 L2480,945 L2480,1000 L1984,985 Z" fill="#7d1517" />
<path d="M1198,623 L1480,633 L1820,644 L2050,650 L2290,657 L2388,663.5 L2388,667 L2430,674 L2480,699 L2480,707 L2430,686 L2388,682 L2290,678 L2050,671 L1820,661 L1590,654.5 L1480,650 L1203,642 L1203,752 L1197,752 Z" fill="#fcfc1a" />
<path d="M1203,642 L1480,650 L1590,654.5 L1820,661 L2050,671 L2290,678 L2388,682 L2430,686 L2480,707 L2480,760 L2430,745 L2430,702 L2290,702 L2240,700 L2188,698 L2140,694 L2112,692 L2050,682 L1950,690 L1830,696 L1740,693 L1715,685 L1684,675 L1626,668 L1590,668 L1480,669 L1375,680 L1203,680 Z" fill="#7d1517" />
<path d="M1203,680 L1375,680 L1480,669 L1590,668 L1626,668 L1684,675 L1715,685 L1740,693 L1830,696 L1950,690 L2050,682 L2112,692 L2140,694 L2188,698 L2240,700 L2290,702 L2430,702 L2430,745 L2417,740 L2417,760 L2290,763 L2060,760 L1820,759 L1745,754 L1625,757 L1490,755 L1412,757 L1203,757 Z" fill="#fcfc1a" />
<path d="M1377,680 L1395,672 L1405,664 L1465,664 L1466,650 L1490,652 L1492,672 L1470,690 L1440,702 L1400,696 Z" fill="#fcfc1a" />
<path d="M1405,664 L1462,664 L1466,700 L1440,702 L1408,700 Z" fill="#c4c42a" opacity="0.55"/>
<path d="M1599,659 L1625,662 L1625,695 L1601,695 Z" fill="#c4c42a" opacity="0.7"/>
<path d="M1833,670 L1860,663 L1880,662 L1899,676 L1870,690 L1850,704 L1835,700 Z" fill="#fcfc1a" />
<path d="M1846,666 L1860,663 L1860,700 L1846,700 Z" fill="#c4c42a" opacity="0.6"/>
<path d="M2070,676 L2090,672 L2112,680 L2112,700 L2075,704 Z" fill="#c4c42a" opacity="0.8"/>
<path d="M2138,690 L2160,683 L2185,684 L2188,704 L2150,704 Z" fill="#c4c42a" opacity="0.85"/>
<path d="M2210,682 L2240,678 L2236,700 L2220,712 Z" fill="#c4c42a" opacity="0.8"/>
<path d="M2050,692 L2112,694 L2112,708 L2068,710 L2050,706 Z" fill="#d81418" />
<path d="M2150,700 L2200,698 L2240,705 L2235,716 L2180,712 Z" fill="#fa1818" />
<path d="M1198,713 L1222,711 L1236,716 L1262,714 L1290,716 L1320,722 L1350,728 L1398,728 L1405,732 L1290,730 L1276,732 L1262,746 L1246,758 L1234,770 L1232,790 L1198,790 Z" fill="#fa1818" />
<rect x="1246" y="704" width="7" height="4" fill="#fa1818" />
<rect x="1262" y="710" width="6" height="5" fill="#fa1818" />
<rect x="1300" y="703" width="5" height="6" fill="#fa1818" />
<rect x="1318" y="708" width="8" height="6" fill="#fa1818" />
<rect x="1335" y="712" width="6" height="5" fill="#fa1818" />
<rect x="1350" y="716" width="8" height="5" fill="#fa1818" />
<rect x="1365" y="720" width="6" height="6" fill="#fa1818" />
<rect x="1380" y="712" width="7" height="5" fill="#fa1818" />
<rect x="1292" y="712" width="6" height="4" fill="#fa1818" />
<rect x="1232" y="706" width="5" height="5" fill="#fa1818" />
<rect x="1215" y="705" width="6" height="5" fill="#fa1818" />
<path d="M1376,689 L1388,688 L1408,716 L1410,732 L1398,732 L1388,712 Z" fill="#fa1818" />
<line x1="1280" y1="728" x2="1412" y2="730" stroke="#5e0d10" stroke-width="1.2" opacity="0.6"/>
<rect x="1269.8" y="704.7" width="5.3" height="2.2" fill="#fa1818" />
<rect x="1312.2" y="711.3" width="2.3" height="3.5" fill="#fa1818" />
<rect x="1212.5" y="713.4" width="2.3" height="2.3" fill="#fa1818" />
<rect x="1289.9" y="725.6" width="2.6" height="2.7" fill="#fa1818" />
<rect x="1330.5" y="729.4" width="4.9" height="3.2" fill="#fa1818" />
<rect x="1400.3" y="701.4" width="6.3" height="2.9" fill="#fa1818" />
<rect x="1233.9" y="703.7" width="3.5" height="4.4" fill="#fa1818" />
<rect x="1241.1" y="718.0" width="5.2" height="3.1" fill="#fa1818" />
<rect x="1314.5" y="701.9" width="2.3" height="2.6" fill="#fa1818" />
<rect x="1341.1" y="713.3" width="3.6" height="3.8" fill="#fa1818" />
<rect x="1295.6" y="709.3" width="6.0" height="4.1" fill="#fa1818" />
<rect x="1253.8" y="717.8" width="4.6" height="4.6" fill="#fa1818" />
<rect x="1350.9" y="708.9" width="6.9" height="2.4" fill="#fa1818" />
<rect x="1288.6" y="723.5" width="2.8" height="3.5" fill="#fa1818" />
<rect x="1212.8" y="720.7" width="5.8" height="3.7" fill="#fa1818" />
<rect x="1380.1" y="709.7" width="5.5" height="3.8" fill="#fa1818" />
<rect x="1321.0" y="714.1" width="6.2" height="4.8" fill="#fa1818" />
<rect x="1299.8" y="720.6" width="2.3" height="4.1" fill="#fa1818" />
<rect x="1334.4" y="730.8" width="6.1" height="2.9" fill="#fa1818" />
<rect x="1282.2" y="720.7" width="2.1" height="3.4" fill="#fa1818" />
<rect x="1238.6" y="703.6" width="2.3" height="4.3" fill="#fa1818" />
<rect x="1230.9" y="707.7" width="4.0" height="4.6" fill="#fa1818" />
<rect x="1221.1" y="713.9" width="4.7" height="4.7" fill="#fa1818" />
<rect x="1368.9" y="726.8" width="3.4" height="3.2" fill="#fa1818" />
<rect x="1276.8" y="727.4" width="6.8" height="2.5" fill="#fa1818" />
<rect x="1240.2" y="707.2" width="3.2" height="3.5" fill="#fa1818" />
<rect x="1322.8" y="708.1" width="2.0" height="3.3" fill="#fa1818" />
<rect x="1278.9" y="717.6" width="6.8" height="4.1" fill="#fa1818" />
<rect x="1308.1" y="719.1" width="5.4" height="2.2" fill="#fa1818" />
<rect x="1384.9" y="724.2" width="6.4" height="4.4" fill="#fa1818" />
<rect x="1283.5" y="712.4" width="2.5" height="3.9" fill="#fa1818" />
<rect x="1217.4" y="702.1" width="3.0" height="2.5" fill="#fa1818" />
<rect x="1273.0" y="701.6" width="2.0" height="2.5" fill="#fa1818" />
<rect x="1225.3" y="711.3" width="2.1" height="4.6" fill="#fa1818" />
<rect x="1327.8" y="704.6" width="3.3" height="3.0" fill="#fa1818" />
<rect x="1277.8" y="703.8" width="6.2" height="5.0" fill="#fa1818" />
<rect x="1298.2" y="715.0" width="2.4" height="2.3" fill="#fa1818" />
<rect x="1273.5" y="708.2" width="6.1" height="2.5" fill="#fa1818" />
<rect x="1209.6" y="729.5" width="4.6" height="2.4" fill="#fa1818" />
<rect x="1313.6" y="700.8" width="4.6" height="4.9" fill="#fa1818" />
<rect x="1377.7" y="721.6" width="3.3" height="3.1" fill="#fa1818" />
<rect x="1238.4" y="723.9" width="4.7" height="4.3" fill="#fa1818" />
<rect x="1270.9" y="706.9" width="6.1" height="5.0" fill="#fa1818" />
<rect x="1375.5" y="725.0" width="6.1" height="4.2" fill="#fa1818" />
<rect x="1250.3" y="716.0" width="3.8" height="2.1" fill="#fa1818" />
<rect x="1210.6" y="708.7" width="3.3" height="4.1" fill="#fa1818" />
<rect x="1396.3" y="713.9" width="6.7" height="5.0" fill="#fa1818" />
<rect x="1396.0" y="711.3" width="3.1" height="2.7" fill="#fa1818" />
<rect x="1244.3" y="706.3" width="5.1" height="4.7" fill="#fa1818" />
<rect x="1373.1" y="714.9" width="5.3" height="4.4" fill="#fa1818" />
<rect x="1222.0" y="720.5" width="6.5" height="4.3" fill="#fa1818" />
<rect x="1355.0" y="714.8" width="2.9" height="4.4" fill="#fa1818" />
<rect x="1271.5" y="724.8" width="6.9" height="3.2" fill="#fa1818" />
<rect x="1285.3" y="729.4" width="5.6" height="2.5" fill="#fa1818" />
<rect x="1230.4" y="704.7" width="6.5" height="4.4" fill="#fa1818" />
<rect x="1234.2" y="725.6" width="6.9" height="4.0" fill="#fa1818" />
<rect x="1275.1" y="717.0" width="2.7" height="2.0" fill="#fa1818" />
<rect x="1399.2" y="720.1" width="4.6" height="4.8" fill="#fa1818" />
<rect x="1291.8" y="727.0" width="6.1" height="2.6" fill="#fa1818" />
<rect x="1255.4" y="709.1" width="3.2" height="3.8" fill="#fa1818" />
<rect x="1456.3" y="720.1" width="1.3" height="2.8" fill="#c4c42a" />
<rect x="1469.5" y="722.0" width="2.2" height="2.8" fill="#c4c42a" />
<rect x="1478.9" y="744.1" width="2.0" height="2.1" fill="#c4c42a" />
<rect x="1493.3" y="700.9" width="1.9" height="1.4" fill="#c4c42a" />
<rect x="1420.6" y="738.4" width="1.3" height="1.9" fill="#c4c42a" />
<rect x="1521.5" y="726.7" width="1.7" height="2.0" fill="#c4c42a" />
<rect x="1497.8" y="737.6" width="1.2" height="2.1" fill="#c4c42a" />
<rect x="1454.8" y="713.3" width="2.5" height="2.0" fill="#c4c42a" />
<rect x="1498.6" y="736.5" width="2.8" height="1.9" fill="#c4c42a" />
<rect x="1505.8" y="724.3" width="2.0" height="2.4" fill="#c4c42a" />
<rect x="1483.3" y="725.6" width="2.0" height="2.9" fill="#c4c42a" />
<rect x="1517.9" y="742.1" width="2.9" height="1.5" fill="#c4c42a" />
<rect x="1498.3" y="745.3" width="2.7" height="1.3" fill="#c4c42a" />
<rect x="1437.0" y="721.2" width="1.1" height="1.5" fill="#c4c42a" />
<rect x="1430.2" y="732.1" width="2.6" height="2.8" fill="#c4c42a" />
<rect x="1441.6" y="734.4" width="2.3" height="1.3" fill="#c4c42a" />
<rect x="1543.6" y="746.4" width="1.4" height="2.9" fill="#c4c42a" />
<rect x="1475.8" y="723.4" width="3.0" height="2.7" fill="#c4c42a" />
<rect x="1442.6" y="720.7" width="2.0" height="1.7" fill="#c4c42a" />
<rect x="1447.4" y="715.3" width="2.4" height="1.0" fill="#c4c42a" />
<rect x="1497.6" y="721.1" width="1.0" height="1.7" fill="#c4c42a" />
<rect x="1507.3" y="724.6" width="1.1" height="3.0" fill="#c4c42a" />
<rect x="1530.4" y="746.6" width="1.2" height="1.5" fill="#c4c42a" />
<rect x="1425.5" y="737.4" width="1.5" height="1.3" fill="#c4c42a" />
<rect x="1479.1" y="743.7" width="2.6" height="1.5" fill="#c4c42a" />
<path d="M1413,705 L1430,700 L1460,712 L1470,740 L1472,757 L1413,757 Z" fill="#c4c42a" opacity="0.35"/>
<path d="M1440,750 L1463,748 L1466,800 L1436,800 Z" fill="#fa1818" />
<path d="M1425,718 L1450,712 L1470,730 L1455,735 Z" fill="#7d1517" opacity="0.6"/>
<rect x="1511" y="705" width="42" height="23" rx="3" fill="none" stroke="#5e0d10" stroke-width="1.5" opacity="0.7"/>
<rect x="1560" y="708" width="10" height="15" rx="3" fill="none" stroke="#5e0d10" stroke-width="1.2" opacity="0.6"/>
<rect x="1491" y="735" width="84" height="52" fill="none" stroke="#5e0d10" stroke-width="1.2" opacity="0.6"/>
<path d="M1596,726 L1603,722 L1611,728 L1611,792 L1596,792 Z" fill="#fa1818" />
<path d="M1616,726 L1622,722 L1629,728 L1629,792 L1616,792 Z" fill="#fa1818" />
<rect x="1597" y="771" width="32" height="5" fill="#fcfc1a" />
<rect x="1590" y="745" width="6" height="47" fill="#fa1818" />
<path d="M1692,720 L1711,720 L1711,740 L1701,744 L1692,740 Z" fill="#7d1517" />
<ellipse cx="1701.5" cy="720" rx="9" ry="8" fill="#fcfc1a" stroke="#5e0d10" stroke-width="1.2"/>
<path d="M1724,724 L1752,724 L1752,750 L1738,755 L1724,750 Z" fill="#7d1517" />
<ellipse cx="1738" cy="724" rx="14" ry="13.5" fill="#fcfc1a" stroke="#5e0d10" stroke-width="1.2"/>
<path d="M1752,720 L1771,720 L1771,737 L1762,741 L1752,737 Z" fill="#7d1517" />
<ellipse cx="1761.5" cy="720" rx="9" ry="8" fill="#fcfc1a" stroke="#5e0d10" stroke-width="1.2"/>
<rect x="1755" y="728" width="10" height="10" fill="#fa1818" />
<path d="M1744,746 L1826,748 L1826,800 L1744,800 Z" fill="#fa1818" />
<rect x="1748" y="783" width="74" height="5" fill="#fcfc1a" />
<rect x="1491" y="750" width="84" height="37" fill="#fa1818" stroke="#5e0d10" stroke-width="1.2"/>
<path d="M1866,716 L1929,716 L1929,770 L1898,781 L1866,770 Z" fill="#7d1517" />
<ellipse cx="1897.5" cy="716.8" rx="31" ry="29" fill="#fcfc1a" stroke="#5e0d10" stroke-width="1.5"/>
<path d="M1876,722 L1900,718 L1924,722 L1922,736 L1900,743 L1878,736 Z" fill="#fa1818" />
<path d="M1876,750 L1909,752 L1909,762 L1878,758 Z" fill="#c4c42a" />
<path d="M1929,707 L1950,710 L1950,778 L1933,778 Z" fill="#fa1818" />
<rect x="1933" y="762" width="17" height="6" fill="#c4c42a" />
<rect x="2046" y="743" width="22" height="29" fill="#fa1818" />
<rect x="2160" y="730" width="28" height="27" fill="#fa1818" />
<rect x="2160" y="757" width="28" height="8" fill="#fcfc1a" />
<rect x="2160" y="765" width="28" height="10" fill="#fa1818" />
<rect x="2363" y="728" width="53" height="90" fill="#fa1818" />
<path d="M2337,688 L2350,684 L2362,690 L2362,721 L2340,721 Z" fill="#c4c42a" opacity="0.6"/>
<path d="M2345,700 L2358,698 L2360,712 L2348,714 Z" fill="#7d1517" />
<path d="M2430,702 L2480,727 L2480,760 L2430,745 Z" fill="#5e0d10" />
<g stroke="#5e0d10" stroke-width="1.3" fill="none">
<rect x="2004" y="775" width="105" height="34" rx="3"/>
<rect x="2117" y="795" width="24" height="33" rx="3"/>
<rect x="2150" y="797" width="23" height="34" rx="3"/>
<rect x="2162" y="856" width="68" height="63" rx="3"/>
<rect x="2242" y="875" width="54" height="42" rx="3"/>
<rect x="2312" y="748" width="22" height="45" rx="3"/>
<rect x="2359" y="740" width="57" height="198" rx="3"/>
<rect x="2008" y="860" width="13" height="12" rx="3"/>
<rect x="2085" y="862" width="15" height="12" rx="3"/>
<rect x="2117" y="840" width="12" height="22" rx="3"/>
<rect x="2148" y="850" width="25" height="20" rx="3"/>
<rect x="2053" y="905" width="28" height="12" rx="3"/>
<rect x="2110" y="898" width="40" height="14" rx="3"/>
<rect x="2222" y="810" width="10" height="18" rx="3"/>
<rect x="2256" y="805" width="13" height="12" rx="3"/>
<rect x="2280" y="808" width="14" height="14" rx="3"/>
<rect x="1491" y="750" width="84" height="37" rx="3"/>
<rect x="1560" y="800" width="40" height="20" rx="3"/>
<rect x="1628" y="810" width="15" height="18" rx="3"/>
<rect x="1650" y="810" width="18" height="18" rx="3"/>
<rect x="1690" y="808" width="18" height="22" rx="3"/>
<rect x="1720" y="810" width="22" height="20" rx="3"/>
</g>
<rect x="2004" y="776" width="105" height="33" fill="#d81418" opacity="0.6"/>
<path d="M2274,800 L2332,793 L2332,818 L2295,830 L2274,825 Z" fill="#7d1517" />
<rect x="2242" y="875" width="54" height="42" fill="#d81418" />
<rect x="2162" y="903" width="68" height="10" fill="#c4c42a" />
<path d="M2359,808 L2416,811 L2416,815 L2359,812 Z" fill="#c4c42a" />
<path d="M2417,760 L2480,760 L2480,945 L2417,938 Z" fill="#e01418" />
<path d="M1192,772 L1205,785 L1215,790 L1235,790 L1222,808 L1232,822 L1205,822 L1200,808 L1196,792 Z" fill="#c4c42a" />
<g stroke="#5e0d10" stroke-width="1.4" fill="none"><line x1="1280" y1="727" x2="1280" y2="815"/><line x1="1412" y1="705" x2="1412" y2="828"/><line x1="1267" y1="818" x2="1412" y2="822"/></g>
<path d="M2060,932 L2178,934 L2178,980 L2172,999 L2066,997 L2060,980 Z" fill="#fa1818" />
<path d="M2062,979 L2177,982 L2172,999 L2066,997 Z" fill="#fcfc1a" />
<path d="M2289,962 L2330,956 L2380,968 L2438,966 L2438,976 L2380,978 L2330,972 L2289,972 Z" fill="#c4c42a" />
<path d="M2271,932 L2440,938 L2440,958 L2380,962 L2300,952 Z" fill="#fa1818" opacity="0.85"/>
</svg>
</div>


<div class="abs" style="left:2389px;top:1559px;width:91px;height:2px;background:#fff"></div>
<div class="abs" style="left:2388px;top:1556px;width:2px;height:8px;background:#fff"></div>
<!-- Registration dialog -->
<div class="abs" style="left:1182px;top:833px;width:802px;height:178px;border-radius:13px;background:rgba(20,30,40,0.55)"></div>
<div class="abs" style="left:1183px;top:834px;width:800px;height:176px;border-radius:12px;background:#f0f0f0;overflow:hidden">
  <div class="abs" style="left:0;top:0;width:800px;height:53px;background:#f3f3f3"></div>
  <svg class="abs" style="left:13px;top:15px" width="32" height="26" viewBox="0 0 32 26">
    <path d="M14.2,3.8 A8.5,8.5 0 1 0 14.2,19.8" fill="none" stroke="#2a6ea6" stroke-width="3"/>
    <path d="M25.2,5 A8.5,8.5 0 1 0 25.2,18.6" fill="none" stroke="#2a6ea6" stroke-width="3"/>
    <path d="M26,3 L26,8 M26,16 L26,21" stroke="#2a6ea6" stroke-width="2.4"/>
  </svg>
  <div class="abs" style="left:50px;top:16px;font-size:23px;color:#878787;white-space:nowrap">Registration</div>
  <div class="abs" style="left:654px;top:13px;font-size:24px;color:#8a8a8a">?</div>
  <svg class="abs" style="left:742px;top:17px" width="24" height="24" viewBox="0 0 24 24"><path d="M2,2 L22,22 M22,2 L2,22" stroke="#7a7a7a" stroke-width="1.6"/></svg>
  <div class="abs" style="left:257px;top:67px;font-size:21.8px;color:#000;white-space:nowrap">RMS = 0.004637 [&#8722;0.000024]</div>
  <div class="abs" style="left:22px;top:114px;width:697px;height:40px;background:#e6e6e6;border:1px solid #bcbcbc"></div>
  <div class="abs" style="left:23px;top:115px;width:479px;height:38px;background:linear-gradient(to right,#06b025 0%,#06b025 14%,#2cbf45 22%,#62d972 31%,#76e381 36%,#62d972 41%,#2cbf45 50%,#06b025 58%,#06b025 100%)"></div>
  <div class="abs" style="left:23px;top:115px;width:479px;height:3px;background:rgba(255,255,255,0.25)"></div>
  <div class="abs" style="left:729px;top:123px;font-size:22px;color:#000;white-space:nowrap;transform:scaleX(0.8);transform-origin:0 0">69%</div>
</div>
</body></html>
